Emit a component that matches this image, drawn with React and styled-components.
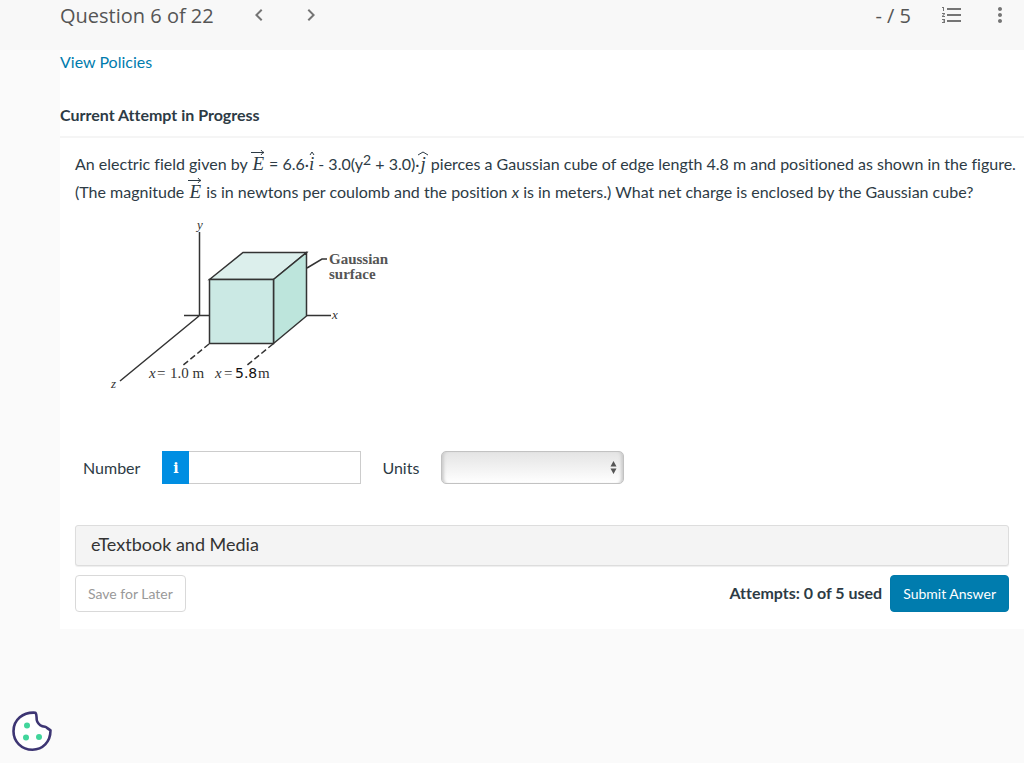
import React from "react";
import styled, { createGlobalStyle } from "styled-components";
import {
  MdChevronLeft,
  MdChevronRight,
  MdFormatListNumbered,
  MdMoreVert,
} from "react-icons/md";

const GlobalStyle = createGlobalStyle`
  *, *::before, *::after { box-sizing: border-box; }
  body {
    margin: 0;
    background: #fafafa;
    color: #2d3b45;
    font-family: Lato, "Open Sans", sans-serif;
    font-size: 16px;
    line-height: 23px;
    font-variant-ligatures: none;
  }
  button, input, select {
    font: inherit;
    font-variant-ligatures: inherit;
    color: inherit;
  }
`;

const Header = styled.header`
  display: flex;
  align-items: center;
  height: 50px;
  padding: 0 12px 20px 60px;
  background: #f8f8f8;
  color: #555;
  font-family: "Open Sans", sans-serif;
  font-size: 20px;
`;

const Title = styled.h1`
  margin: 0;
  font-size: inherit;
  font-weight: 400;
`;

const Pager = styled.nav`
  display: flex;
  gap: 28px;
  margin-left: 33px;
`;

const Tools = styled.div`
  display: flex;
  align-items: center;
  gap: 24px;
  margin-left: auto;
`;

const Score = styled.span`
  margin-right: 5px;
`;

const IconButton = styled.button`
  display: flex;
  padding: 0;
  border: 0;
  background: none;
  color: #757575;
  font-size: 24px;
  cursor: pointer;
`;

const Panel = styled.main`
  margin-left: 60px;
  padding-bottom: 17px;
  background: #fff;
`;

const PolicyLink = styled.a`
  display: block;
  width: fit-content;
  color: #007cae;
  text-decoration: none;
`;

const Status = styled.h2`
  margin: 0;
  padding: 30px 0 10px;
  border-bottom: 2px solid #f5f5f5;
  font-size: 16px;
  font-weight: 700;
`;

const Body = styled.section`
  padding: 12px 15px 0;
`;

const Prompt = styled.p`
  margin: 0 -15px 0 0;
  line-height: 28px;

  sup {
    font-size: 14px;
    line-height: 0;
    vertical-align: 5px;
  }
`;

const MathLetter = styled.span`
  position: relative;
  display: inline-block;
  margin: 0 ${(p) => p.$space}px;
  font: italic 19px/20px "Liberation Serif", serif;
`;

const Accent = styled.svg`
  position: absolute;
  left: 50%;
  bottom: 100%;
  margin: 0 0 -2px -${(p) => p.width / 2}px;
  fill: none;
  stroke: currentColor;
`;

const Figure = styled.svg`
  display: block;
  margin: 4px 0 51px 15px;
  fill: none;
  stroke: #333;
  stroke-width: 1.5;

  text {
    stroke: none;
    fill: #333;
    font: 15px "Liberation Serif", serif;
  }
  .var { font-style: italic; }
  .axis { font-style: italic; font-size: 13px; }
  .sans { font: 14px "DejaVu Sans", sans-serif; fill: #111; }
  .bold { font-weight: 700; fill: #555; }
`;

const AnswerRow = styled.div`
  display: flex;
  align-items: center;
  padding-left: 8px;
`;

const Field = styled.div`
  display: flex;
  align-items: center;
  gap: 22px;
  margin-right: 21px;
`;

const InputGroup = styled.div`
  display: flex;
  width: 199px;
  height: 33px;
`;

const InfoButton = styled.button`
  width: 27px;
  padding: 0;
  border: 0;
  background: #008ee2;
  color: #fff;
  font: 700 14px "DejaVu Serif", serif;
  cursor: pointer;
`;

const NumberInput = styled.input`
  flex: 1;
  min-width: 0;
  padding: 0 8px;
  border: 1px solid #ccc;
  border-left: 0;
`;

const SelectWrap = styled.div`
  position: relative;
  width: 183px;
  height: 33px;

  svg {
    position: absolute;
    right: 7px;
    top: 10px;
    fill: #555;
    pointer-events: none;
  }
`;

const UnitSelect = styled.select`
  appearance: none;
  width: 100%;
  height: 100%;
  padding: 0 24px 0 10px;
  border: 1px solid #c2c2c2;
  border-radius: 5px;
  background: linear-gradient(#e4e4e4, #fff);
  box-shadow: inset 4px 0 3px -2px #ccc, inset -4px 0 3px -2px #ccc;
`;

const Resource = styled.button`
  display: block;
  width: 100%;
  height: 41px;
  margin: 41px 0 9px;
  padding: 0 15px 2px;
  border: 1px solid #ddd;
  border-radius: 3px;
  background: #f4f4f4;
  box-shadow: 0 1px 1px #eee;
  color: #333;
  font-size: 18px;
  text-align: left;
  cursor: pointer;
`;

const Actions = styled.div`
  display: flex;
  align-items: center;
  justify-content: space-between;
`;

const Submission = styled.div`
  display: flex;
  align-items: center;
  gap: 8px;
`;

const Attempts = styled.strong`
  padding-bottom: 3px;
`;

const ActionButton = styled.button`
  height: 37px;
  padding: 0 12px;
  border: 1px solid ${(p) => (p.$primary ? "#0079aa" : "#d9d9d9")};
  border-radius: 4px;
  background: ${(p) => (p.$primary ? "#007cae" : "#fff")};
  color: ${(p) => (p.$primary ? "#fff" : "#999")};
  font-size: 14px;
  cursor: pointer;
`;

const CookieButton = styled.button`
  position: fixed;
  left: 12px;
  bottom: 11px;
  display: flex;
  padding: 0;
  border: 0;
  background: none;
  cursor: pointer;
`;

function Vector() {
  return (
    <MathLetter $space={1}>
      E
      <Accent width="14" height="7" viewBox="0 0 14 7" aria-hidden="true">
        <path d="M0 3.5H13M10 1Q11 3 13 3.5Q11 4 10 6" />
      </Accent>
    </MathLetter>
  );
}

function UnitVector({ name, wide }) {
  return (
    <MathLetter $space={wide ? 1 : 0}>
      {name}
      <Accent
        width={wide ? 10 : 6}
        height="5"
        viewBox={wide ? "0 0 10 5" : "0 0 6 5"}
        aria-hidden="true"
      >
        <path d={wide ? "M0 4L5 1L10 4" : "M1 4L3 1L5 4"} />
      </Accent>
    </MathLetter>
  );
}

function CubeFigure() {
  return (
    <Figure
      width="310"
      height="190"
      viewBox="90 210 310 190"
      role="img"
      aria-label="Gaussian cube on x, y and z axes"
    >
      <path d="M199.500 232V316M184 315.500H209M199 316L120 381M307 315.500H331M307 268L322 259H327" />
      <path d="M209.500 279.500L243 252.500H306.500L273.500 279.500Z" fill="#dcefec" />
      <path d="M273.500 279.500L306.500 252.500V316L273.500 343.500Z" fill="#bde5dc" />
      <path d="M209.500 279.500H273.500V343.500H209.500Z" fill="#cbe9e4" />
      <path d="M209 344L182 366M273 344L246 366" strokeDasharray="6 3" />
      <text className="axis" x="197" y="229">y</text>
      <text className="axis" x="332" y="319">x</text>
      <text className="axis" x="111" y="388">z</text>
      <text className="bold" x="329" y="264">Gaussian</text>
      <text className="bold" x="329" y="279">surface</text>
      <text className="var" x="149" y="378">x</text>
      <text x="157" y="378">=</text>
      <text x="170" y="378">1.0 m</text>
      <text className="var" x="215" y="378">x</text>
      <text x="224" y="378">=</text>
      <text className="sans" x="235" y="378">5.8</text>
      <text x="258" y="378">m</text>
    </Figure>
  );
}

export default function App() {
  return (
    <>
      <GlobalStyle />
      <Header>
        <Title>Question 6 of 22</Title>
        <Pager aria-label="Questions">
          <IconButton aria-label="Previous question"><MdChevronLeft /></IconButton>
          <IconButton aria-label="Next question"><MdChevronRight /></IconButton>
        </Pager>
        <Tools>
          <Score>- / 5</Score>
          <IconButton aria-label="Question list"><MdFormatListNumbered /></IconButton>
          <IconButton aria-label="More options"><MdMoreVert /></IconButton>
        </Tools>
      </Header>
      <Panel>
        <PolicyLink href="#policies">View Policies</PolicyLink>
        <Status>Current Attempt in Progress</Status>
        <Body>
          <Prompt>
            An electric field given by <Vector /> = 6.6·<UnitVector name="i" /> - 3.0(y<sup>2</sup> + 3.0)·<UnitVector name="j" wide /> pierces
            a Gaussian cube of edge length 4.8 m and positioned as shown in the figure. (The
            magnitude <Vector /> is in newtons per coulomb and the position <i>x</i> is in
            meters.) What net charge is enclosed by the Gaussian cube?
          </Prompt>
          <CubeFigure />
          <AnswerRow>
            <Field>
              <label htmlFor="number">Number</label>
              <InputGroup>
                <InfoButton aria-label="Number format help">i</InfoButton>
                <NumberInput id="number" type="text" />
              </InputGroup>
            </Field>
            <Field>
              <label htmlFor="units">Units</label>
              <SelectWrap>
                <UnitSelect id="units" defaultValue="">
                  <option value="" />
                </UnitSelect>
                <svg width="7" height="13" viewBox="0 0 7 13" aria-hidden="true">
                  <path d="M0.500 5.500L3.500 0L6.500 5.500ZM0.500 7.500H6.500L3.500 13Z" />
                </svg>
              </SelectWrap>
            </Field>
          </AnswerRow>
          <Resource>eTextbook and Media</Resource>
          <Actions>
            <ActionButton>Save for Later</ActionButton>
            <Submission>
              <Attempts>Attempts: 0 of 5 used</Attempts>
              <ActionButton $primary>Submit Answer</ActionButton>
            </Submission>
          </Actions>
        </Body>
      </Panel>
      <CookieButton aria-label="Cookie preferences">
        <svg width="41" height="41" viewBox="0 0 41 41">
          <path
            d="M23.500 1.700C25.500 4.500 23.800 7.500 25.200 10.500C26.800 14 29.800 15.500 33 15.800C34.500 16 36.500 18.500 38.500 19.200C38.500 31 30.500 38.700 20.500 38.700C9.500 38.700 1.500 30.500 1.500 20.200C1.500 8.800 11 0.800 23.500 1.700Z"
            fill="#fff"
            stroke="#3d3573"
            strokeWidth="2.600"
            strokeLinejoin="round"
          />
          <g fill="#41d59b">
            <circle cx="15" cy="14.500" r="3" />
            <circle cx="14" cy="26.500" r="3" />
            <circle cx="27" cy="26" r="3" />
          </g>
        </svg>
      </CookieButton>
    </>
  );
}
